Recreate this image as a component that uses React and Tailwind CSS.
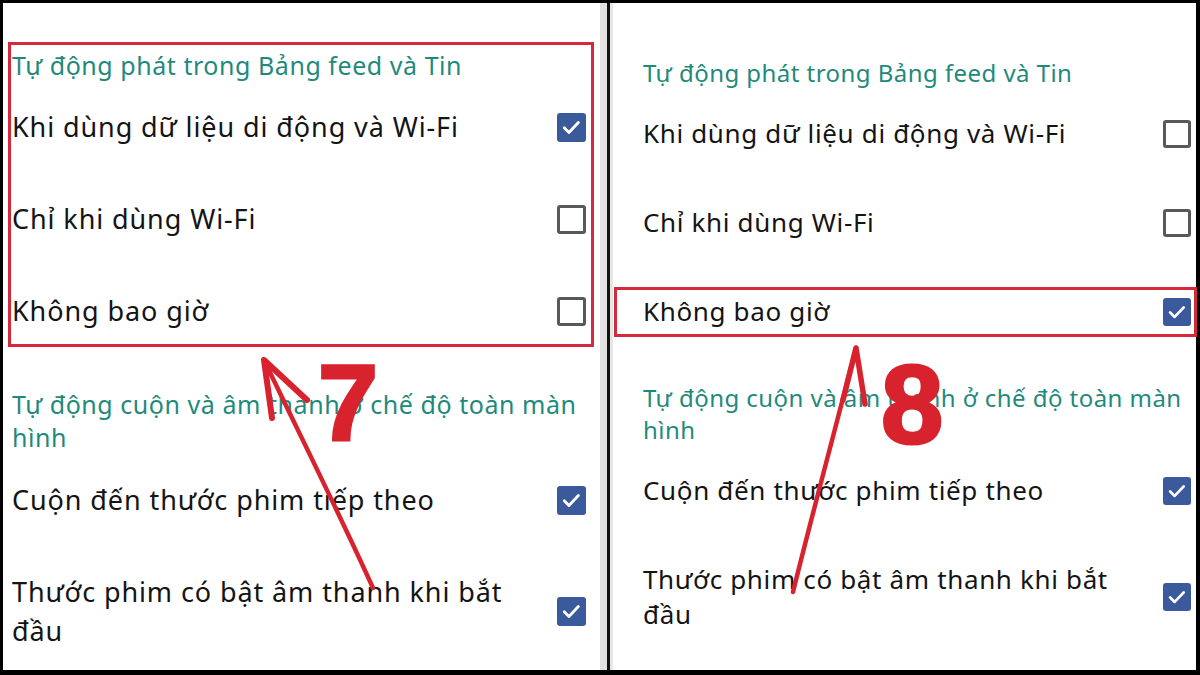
import React from 'react';

const FONT = { fontFamily: '"Noto Sans", "Open Sans", sans-serif' };

const Check = ({ checked, size }) => {
  if (checked) {
    return (
      <div className={`${size} shrink-0 rounded-[3px] bg-[#3b5a9c] flex items-center justify-center`}>
        <svg viewBox="0 0 24 24" className="w-[78%] h-[78%]" fill="none" stroke="#fff" strokeWidth="3" strokeLinecap="round" strokeLinejoin="round">
          <path d="M4.5 12.5l5 5L19.5 7" />
        </svg>
      </div>
    );
  }
  return <div className={`${size} shrink-0 rounded-[3px] border-[3px] border-[#595959] bg-white`} />;
};

const Option = ({ label, checked, rowClass, textClass, boxSize }) => (
  <div className={`flex items-center justify-between ${rowClass}`}>
    <span className={textClass}>{label}</span>
    <Check checked={checked} size={boxSize} />
  </div>
);

const Panel = ({ cfg, values }) => (
  <div className={`bg-white h-full flex flex-col ${cfg.pad}`} style={FONT}>
    <div className={cfg.header}>Tự động phát trong Bảng feed và Tin</div>
    <Option label="Khi dùng dữ liệu di động và Wi-Fi" checked={values[0]} rowClass={cfg.row} textClass={cfg.text} boxSize={cfg.box} />
    <Option label="Chỉ khi dùng Wi-Fi" checked={values[1]} rowClass={cfg.row} textClass={cfg.text} boxSize={cfg.box} />
    <Option label="Không bao giờ" checked={values[2]} rowClass={cfg.row} textClass={cfg.text} boxSize={cfg.box} />
    <div className={cfg.header2}>
      Tự động cuộn và âm thanh ở chế độ toàn màn
      <br />
      hình
    </div>
    <Option label="Cuộn đến thước phim tiếp theo" checked rowClass={cfg.row} textClass={cfg.text} boxSize={cfg.box} />
    <div className={`flex items-center justify-between ${cfg.lastRow}`}>
      <span className={cfg.text2}>
        Thước phim có bật âm thanh khi bắt
        <br />
        đầu
      </span>
      <Check checked size={cfg.box} />
    </div>
  </div>
);

const left = {
  pad: 'pt-[46px] pl-[9px] pr-[14px]',
  header: 'text-[25px] leading-[32px] tracking-[0.55px] text-[#1f8a7c] whitespace-nowrap',
  header2: 'mt-[31px] text-[25px] leading-[33px] tracking-[0.55px] text-[#1f8a7c] whitespace-nowrap',
  row: 'h-[92px]',
  lastRow: 'pt-[26px]',
  text: 'text-[27px] tracking-[0.9px] text-[#141414] whitespace-nowrap',
  text2: 'text-[27px] leading-[39px] tracking-[0.9px] text-[#141414] whitespace-nowrap',
  box: 'w-[29px] h-[29px]',
};

const right = {
  pad: 'pt-[54px] pl-[30px] pr-[5px]',
  header: 'text-[24px] leading-[32px] tracking-[0.45px] text-[#1f8a7c] whitespace-nowrap',
  header2: 'mt-[26px] text-[24px] leading-[32px] tracking-[0.45px] text-[#1f8a7c] whitespace-nowrap',
  row: 'h-[89px]',
  lastRow: 'pt-[27px]',
  text: 'text-[26px] tracking-[0.65px] text-[#141414] whitespace-nowrap',
  text2: 'text-[26px] leading-[35px] tracking-[0.65px] text-[#141414] whitespace-nowrap',
  box: 'w-[28px] h-[28px]',
};

const RED = '#d8232f';

// callout boxes, arrows and step numbers drawn over both screens
const Annotations = () => (
  <svg className="absolute inset-0 pointer-events-none" width="1200" height="675" viewBox="0 0 1200 675">
    <rect x="9.5" y="43.5" width="583" height="302" fill="none" stroke="#d42a3b" strokeWidth="3" />
    <rect x="615.5" y="288.5" width="580" height="47" fill="none" stroke="#d42a3b" strokeWidth="3" />
    <g fill="none" stroke={RED} strokeLinecap="round" strokeLinejoin="round">
      <path d="M373 588 C340 515 300 435 264 360" strokeWidth="4.5" />
      <path d="M272 418 L264 360 L307 400" strokeWidth="6" />
      <path d="M793 592 C812 515 835 430 856 348" strokeWidth="4.5" />
      <path d="M843 400 L856 348 L865 404" strokeWidth="5.5" />
    </g>
    <g fill={RED} stroke={RED} strokeWidth="3" fontFamily='"Liberation Sans", Arial, sans-serif' fontWeight="700">
      <text x="318" y="440" fontSize="108">7</text>
      <text x="881" y="443" fontSize="112">8</text>
    </g>
  </svg>
);

export default function App() {
  return (
    <div className="relative w-[1200px] h-[675px] bg-black overflow-hidden flex pt-[3px] pl-[3px] pb-[5px] pr-[4px]">
      <div className="w-[597px] h-full">
        <Panel cfg={left} values={[true, false, false]} />
      </div>
      <div className="w-[7px] h-full bg-[#e2e2e2]" />
      <div className="w-[3px] h-full bg-[#111]" />
      <div className="w-[3px] h-full bg-[#e6e6e6]" />
      <div className="flex-1 h-full">
        <Panel cfg={right} values={[false, false, true]} />
      </div>
      <Annotations />
    </div>
  );
}
